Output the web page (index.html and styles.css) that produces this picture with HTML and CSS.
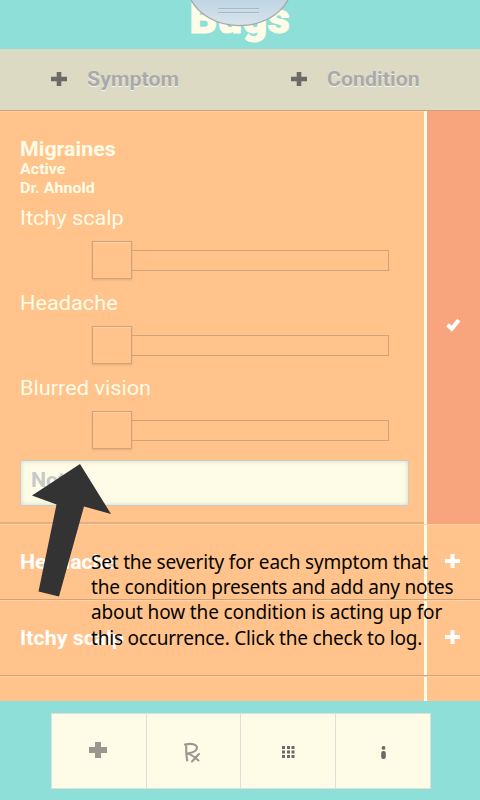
FILE: index.html
```html
<!DOCTYPE html>
<html lang="en">
<head>
<meta charset="utf-8">
<title>Bugs</title>
<link rel="stylesheet" href="styles.css">
</head>
<body>
<div class="app">
  <header class="header">
    <h1 class="title">Bugs</h1>
    <svg class="pull" width="110" height="28" viewBox="0 0 110 28">
      <defs><linearGradient id="pull" x1="0" y1="0" x2="0" y2="1"><stop offset="0" stop-color="#bdd3e2"/><stop offset="1" stop-color="#d8e4ed"/></linearGradient></defs>
      <path d="M4.500 -3C13 15 32 25.600 54.500 25.600S96 15 104.500 -3Z" fill="url(#pull)" stroke="#a5aaa9" stroke-width="1.300"/>
      <path d="M33 8.500H74M33 12.500H74" stroke="#a3b8cb"/>
      <path d="M33 9.500H74M33 13.500H74" stroke="#d4e0e9"/>
    </svg>
  </header>
  <nav class="toolbar">
    <a class="add"><svg width="16" height="14" viewBox="0 0 16 14"><path d="M5.700 0h4.600v4.700H16v4.600h-5.700V14H5.700V9.300H0V4.700h5.700z"/></svg><span class="wide">Symptom</span></a>
    <a class="add"><svg width="16" height="14" viewBox="0 0 16 14"><path d="M5.700 0h4.600v4.700H16v4.600h-5.700V14H5.700V9.300H0V4.700h5.700z"/></svg><span class="wide">Condition</span></a>
  </nav>
  <main class="list">
    <section class="row open">
      <div class="content">
        <h2 class="name wide">Migraines</h2>
        <p class="meta wide">Active</p>
        <p class="meta doctor wide">Dr. Ahnold</p>
        <div class="field"><span class="label wide">Itchy scalp</span><div class="slider"><i class="handle"></i><i class="track"></i></div></div>
        <div class="field"><span class="label wide">Headache</span><div class="slider"><i class="handle"></i><i class="track"></i></div></div>
        <div class="field"><span class="label wide">Blurred vision</span><div class="slider"><i class="handle"></i><i class="track"></i></div></div>
        <div class="notes"><span class="wide">Notes</span></div>
      </div>
      <div class="action"><svg width="15" height="14" viewBox="0 0 15 14"><path d="M1.500 6.700 5.800 10.700 12.800 2" fill="none" stroke="#fff" stroke-width="4"/></svg></div>
    </section>
    <section class="row item">
      <div class="content"><span class="wide">Headache</span></div>
      <div class="action"><svg width="15" height="14" viewBox="0 0 15 14"><path d="M5.500 0h4v5H15v4H9.500v5h-4V9H0V5h5.500z" fill="#fff"/></svg></div>
    </section>
    <section class="row item">
      <div class="content"><span class="wide">Itchy scalp</span></div>
      <div class="action"><svg width="15" height="14" viewBox="0 0 15 14"><path d="M5.500 0h4v5H15v4H9.500v5h-4V9H0V5h5.500z" fill="#fff"/></svg></div>
    </section>
    <section class="row last"><div class="content"></div><div class="action"></div></section>
  </main>
  <footer class="footer">
    <div class="tabs">
      <a><svg width="18" height="16" viewBox="0 0 18 16"><path d="M6 0h6v5h6v6h-6v5H6v-5H0V5h6z" fill="#9b9692"/></svg></a>
      <a class="rx"><svg width="18" height="21" viewBox="0 0 18 21"><path d="M3.200 2.500C3.200 8 3 13 4.200 18.500M2 2.500C8 1.200 14 2 14 5.800 14 9.500 8 11 4.200 11.500 8 12 12 15.500 15.500 18.500M16 12C13.500 14.500 11.500 17 9 19.500" fill="none" stroke="#9b9692" stroke-width="2.100" stroke-linecap="round"/></svg></a>
      <a class="grid"><svg width="13" height="12" viewBox="0 0 13 12"><path d="M0 0h3v3H0zM5 0h3v3H5zM9.500 0h3v3h-3zM0 4.500h3v3H0zM5 4.500h3v3H5zM9.500 4.500h3v3h-3zM0 9h3v3H0zM5 9h3v3H5zM9.500 9h3v3h-3z" fill="#6b6968"/></svg></a>
      <a class="info"><svg width="5" height="13" viewBox="0 0 5 13"><circle cx="2.500" cy="1.900" r="1.900" fill="#6b6968"/><rect x=".2" y="5" width="4.600" height="8" rx="2" fill="#6b6968"/></svg></a>
    </div>
  </footer>
  <svg class="arrow" width="80" height="134" viewBox="0 0 80 134"><path d="M48 0 79 50 52 42.500 27 132.500 6.500 127.500 24.500 40.500 0 31.500Z" fill="#333"/></svg>
  <div class="hint"><span>Set the severity for each symptom that</span><span>the condition presents and add any notes</span><span class="loose">about how the condition is acting up for</span><span>this occurrence. Click the check to log.</span></div>
</div>
</body>
</html>
```
FILE: styles.css
```css
* { box-sizing: border-box; }
body { margin: 0; font-family: Roboto, "Liberation Sans", sans-serif; }
h1, h2, p { margin: 0; }
svg { display: block; }
.wide { width: max-content; transform: scaleX(1.07); transform-origin: left; }
.app { position: relative; width: 480px; height: 800px; overflow: hidden; display: flex; flex-direction: column; background: #8ddfd8; }
.header { position: relative; height: 49px; display: flex; justify-content: center; }
.title { font: 900 43px/48px Roboto, sans-serif; color: #fefce6; margin-top: -6px; -webkit-text-stroke: 1px #fefce6; letter-spacing: .5px; white-space: nowrap; }
.pull { position: absolute; top: 0; left: 185px; }
.toolbar { height: 62px; display: grid; grid-template-columns: 1fr 1fr; background: #dddac3; border-bottom: 1px solid #cda27b; }
.add { display: flex; align-items: center; padding: 0 0 1px 51px; gap: 20px; font-weight: 700; font-size: 20px; line-height: 24px; color: #aaa; text-shadow: 0 1px 0 #f4f4f4; }
.add svg { fill: #6b6a66; margin-top: -1px; }
.list { height: 590px; overflow: hidden; background: #ffc38b; }
.row { display: grid; grid-template-columns: 424px 56px; }
.content { color: #fefce6; border-bottom: 1px solid #d0a47b; border-top: 1px solid #ffd3aa; }
.action { display: flex; align-items: center; justify-content: center; border-left: 3px solid #fefce6; }
.open { height: 413px; }
.open .content { padding: 25px 0 0 20px; border-bottom: 2px solid #e3af80; }
.open .action { background: #f8a57d; padding-top: 14px; }
.name { font-size: 20px; line-height: 24px; font-weight: 700; }
.meta { font-size: 15px; line-height: 19px; font-weight: 700; margin-top: -1px; }
.doctor { margin-top: 0; }
.field { height: 85px; font-size: 20px; line-height: 24px; }
.label { display: block; transform: scaleX(1.085); }
.doctor + .field { margin-top: 8px; }
.slider { display: flex; align-items: center; margin: 11px 0 0 72px; }
.handle { width: 40px; height: 38px; border: 1px solid #cfa37b; box-shadow: inset 0 1px 0 #ffd0ac, 0 1px 2px rgba(120,70,20,.2); }
.track { width: 257px; height: 21px; border: 1px solid #cfa37b; border-left: 0; }
.notes { width: 389px; height: 46px; margin-top: -1px; border: 1px solid #c9cbc9; background: #fefce6; box-shadow: inset 0 0 4px rgba(80,80,70,.25); padding: 7px 10px; color: #c9c9c9; font-weight: 700; font-size: 20px; line-height: 24px; }
.notes span { display: block; }
.item { height: 76px; font-weight: 700; font-size: 20px; }
.item .content { display: flex; align-items: center; padding-left: 20px; color: #fff; }
.item .action, .last .action { border-top: 1px solid #ffd3aa; border-bottom: 1px solid #d0a47b; border-left: 0; box-shadow: inset 3px 0 0 #fefce6; padding: 0 2px 2px 3px; }
.last { height: 76px; }
.footer { height: 99px; padding: 12px 0 0 51px; }
.tabs { width: 380px; height: 76px; display: grid; grid-template-columns: repeat(4, 1fr); background: #fefce6; border: 1px solid #dedfdb; }
.tabs a { display: flex; justify-content: center; align-items: center; border-right: 1px solid #dfdfd9; }
.tabs a:first-child { padding: 0 2px 2px 0; }
.tabs a:last-child { border-right: 0; }
.tabs .rx { padding: 2px 2px 0 0; }
.tabs .grid, .tabs .info { padding: 2px 0 0 1px; }
.arrow { position: absolute; left: 32px; top: 464px; }
.hint { position: absolute; left: 91px; top: 550px; display: grid; justify-items: start; font: 19px/25.200px "Noto Sans", sans-serif; color: #050505; white-space: nowrap; letter-spacing: -.2px; }
.hint .loose { letter-spacing: -.13px; }
```
